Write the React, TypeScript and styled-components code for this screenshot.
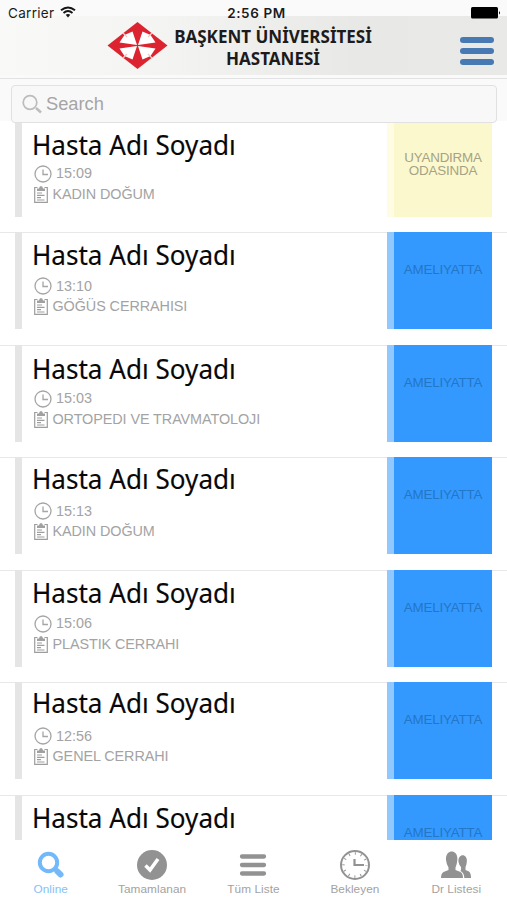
import React from "react";
import styled, { createGlobalStyle } from "styled-components";

const Global = createGlobalStyle`
  * { box-sizing: border-box; }
  body { margin: 0; background: #fff; font-family: "Liberation Sans", Arial, sans-serif; }
`;

const Screen = styled.div`
  width: 507px;
  height: 900px;
  display: flex;
  flex-direction: column;
  overflow: hidden;
  background: #fff;
`;

const Header = styled.header`
  height: 79px;
  flex: none;
  background: #fafafa;
  border-bottom: 1px solid #e2e2e2;
`;

const StatusBar = styled.div`
  height: 16px;
  padding: 4px 6px 0 8px;
  display: grid;
  grid-template-columns: 1fr auto 1fr;
  color: #1c1c1c;
  font: 13.5px/19px Inter, "Liberation Sans", sans-serif;
`;

const Carrier = styled.div`
  display: flex;
  gap: 6px;
  letter-spacing: 0.3px;
  svg { margin-top: 2px; }
`;

const Clock = styled.div`
  font-weight: 600;
  letter-spacing: 0.6px;
  padding-left: 4px;
`;

const Battery = styled.svg`
  justify-self: end;
  margin-top: 3px;
`;

const Banner = styled.div`
  height: 59px;
  padding: 6px 13px 0 107px;
  display: flex;
  background: linear-gradient(90deg, #f9f9f8 0%, #f3f3f1 35%, #e8e8e6 70%, #e9e9e7 100%);
`;

const Logo = styled.svg`
  flex: none;
`;

const Title = styled.h1`
  margin: 3px 0 0 -15px;
  width: 240px;
  flex: none;
  text-align: center;
  font: 700 18px/22px "Noto Sans", "Open Sans", sans-serif;
  color: #1d1b1b;
  transform: scaleX(0.945);
`;

const MenuButton = styled.button`
  margin: 15px 0 0 auto;
  padding: 0;
  border: 0;
  background: none;
  width: 34px;
  height: 28px;
  display: flex;
  flex-direction: column;
  justify-content: space-between;
`;

const MenuLine = styled.span`
  height: 6px;
  border-radius: 3px;
  background: #4779b2;
`;

const SearchBar = styled.div`
  height: 44px;
  flex: none;
  padding: 6px 10px 0 11px;
  background: linear-gradient(#fafafa 42px, #fff 42px);
`;

const SearchField = styled.div`
  height: 38px;
  border: 1.5px solid #e1e1e1;
  border-radius: 4px;
  background: #f8f8f8;
  display: flex;
  align-items: center;
  padding-left: 10px;
  gap: 3px;
  color: #a5a5a5;
  font-size: 18.3px;
  line-height: 20px;
`;

const List = styled.main`
  flex: 1;
  min-height: 0;
  overflow: hidden;
`;

const Row = styled.article<{ $first?: boolean }>`
  height: 112.5px;
  margin-top: ${(p) => (p.$first ? "-3.5px" : "0")};
  display: flex;
  padding: 0 15px;
  background: linear-gradient(#e8e8e8, #e8e8e8) 0 0 / 100% 1px no-repeat;
`;

const Marker = styled.div`
  width: 7px;
  height: 97px;
  flex: none;
  background: #e5e5e5;
`;

const Details = styled.div`
  flex: 1;
  min-width: 0;
  padding-left: 10px;
  display: flex;
  flex-direction: column;
`;

const NameLine = styled.div<{ $shift: number }>`
  height: 44px;
  padding-top: ${(p) => p.$shift}px;
`;

const Name = styled.h2`
  margin: 0;
  width: max-content;
  font: 400 27px/32px "Noto Sans", "Open Sans", sans-serif;
  color: #080808;
  transform: scaleX(0.966);
  transform-origin: 0 0;
  -webkit-text-stroke: 0.15px #080808;
`;

const Meta = styled.div`
  height: 20.5px;
  display: flex;
  align-items: center;
  gap: 4px;
  padding-left: 2px;
  color: #a3a3a3;
  font-size: 14.4px;
  white-space: nowrap;
  svg { flex: none; }
`;

const Department = styled.span`
  letter-spacing: -0.08px;
  margin-top: -1px;
  margin-left: 0.5px;
`;

const Time = styled.span`
  margin-top: -1px;
`;

const Status = styled.div<{ $waking?: boolean }>`
  width: 105px;
  height: 97px;
  flex: none;
  padding-top: 31px;
  border-left: 7px solid ${(p) => (p.$waking ? "#fffce3" : "#91c8fd")};
  background: ${(p) => (p.$waking ? "#fcf8cd" : "#3399ff")};
  color: ${(p) => (p.$waking ? "#a5a386" : "#2476c6")};
  text-align: center;
  font-size: 13.4px;
  line-height: 13.5px;
  letter-spacing: -0.2px;
`;

const TabBar = styled.nav`
  height: 60px;
  flex: none;
  display: grid;
  grid-template-columns: repeat(5, 1fr);
  background: #fff;
`;

const Tab = styled.button<{ $active?: boolean }>`
  border: 0;
  padding: 9px 0 0;
  background: none;
  display: flex;
  flex-direction: column;
  align-items: center;
  gap: 1px;
  color: ${(p) => (p.$active ? "#73b8f8" : "#929292")};
  font: 11.8px/14px "Liberation Sans", Arial, sans-serif;
  letter-spacing: 0.05px;
  white-space: nowrap;
`;

const TabLabel = styled.span<{ $active?: boolean }>`
  color: ${(p) => (p.$active ? "#85c1f8" : "#a2a2a2")};
`;

const BaskentLogo = () => (
  <Logo width="61" height="47" viewBox="0 0 61 47">
    <path d="M30.500 0 60.500 23.500 30.500 47 0.500 23.500Z" fill="#dc2430" />
    <g fill="#fff">
      <path d="M30 23 12.500 20.500 17.500 13 25.500 9.500Z" />
      <path d="M31 23 48.500 20.500 43.500 13 35.500 9.500Z" />
      <path d="M30 24 12.500 26.500 17.500 34 25.500 37.500Z" />
      <path d="M31 24 48.500 26.500 43.500 34 35.500 37.500Z" />
    </g>
    <path d="M16 11 20 15M45 11 41 15M16 36 20 32M45 36 41 32" stroke="#f7c8c5" strokeWidth="1.3" />
  </Logo>
);

const WifiIcon = () => (
  <svg width="16" height="12" viewBox="0 0 16 12" fill="none" stroke="#151515" strokeWidth="1.9">
    <path d="M1 4.300Q8-1.500 15 4.300M3.500 7Q8 3.200 12.500 7" />
    <path d="M5.700 8.800Q8 7 10.300 8.800L8 11.500Z" fill="#151515" stroke="none" />
  </svg>
);

const SmallClock = () => (
  <svg width="18" height="18" viewBox="0 0 18 18" fill="none" stroke="#a5a5a5" strokeWidth="1.3">
    <circle cx="9" cy="9" r="8" />
    <path d="M9 4.500V9.500H14" />
  </svg>
);

const Clipboard = () => (
  <svg width="14" height="17" viewBox="0 0 14 17" fill="none" stroke="#9d9d9d">
    <path d="M3.500 1.500H.7V16.300H13.300V1.500H10.500" strokeWidth="1.2" />
    <path d="M3 5V2.500H5Q5.200 0 7 0T9 2.500H11V5Z" fill="#a0a0a0" stroke="none" />
    <path d="M3 7H8M3 9.300H10.500M3 11.600H7M3 14H10.500" strokeWidth="1.2" />
  </svg>
);

const tabs = [
  {
    label: "Online",
    icon: (
      <svg width="30" height="32" viewBox="0 0 30 32" fill="none" stroke="currentColor">
        <circle cx="12.500" cy="13.500" r="8.700" strokeWidth="4" />
        <path d="m19 20 1.500 1.500" strokeWidth="4" />
        <path d="m21.500 22.500 3 3" strokeWidth="6" strokeLinecap="round" />
      </svg>
    ),
  },
  {
    label: "Tamamlanan",
    icon: (
      <svg width="30" height="32" viewBox="0 0 30 32">
        <circle cx="15" cy="16" r="15" fill="currentColor" />
        <path d="m8.500 16.500 4.500 4.500 8-11" fill="none" stroke="#fff" strokeWidth="3.500" />
      </svg>
    ),
  },
  {
    label: "Tüm Liste",
    icon: (
      <svg width="30" height="32" viewBox="0 0 30 32">
        <path d="M4 7.500H26M4 16H26M4 24.500H26" stroke="currentColor" strokeWidth="4.300" strokeLinecap="round" />
      </svg>
    ),
  },
  {
    label: "Bekleyen",
    icon: (
      <svg width="30" height="32" viewBox="0 0 30 32" fill="none" stroke="currentColor">
        <circle cx="15" cy="16" r="14" strokeWidth="2" />
        <circle cx="15" cy="16" r="11.500" strokeWidth="2.500" strokeDasharray="1 5.021" strokeDashoffset="0.5" />
        <path d="M14.500 10V16H24" strokeWidth="2.200" />
      </svg>
    ),
  },
  {
    label: "Dr Listesi",
    icon: (
      <svg width="30" height="32" viewBox="0 0 30 32" fill="currentColor">
        <path d="M17.500 13C16.500 4 27 4 25.800 13Q25.500 16 24.500 18V21L28 22.500Q30 24 30 29H23.300Q23.300 24 19.500 22Q20.500 20 20 18Q18 16 17.500 13Z" />
        <path d="M5 11C4-.5 17.500-.5 16.300 11Q16 15.500 14.500 18.500V21L19.500 23Q22 24.500 22 29H0Q0 24.500 2.500 23L7.500 21V18.500Q5.500 15.500 5 11Z" />
      </svg>
    ),
  },
];

interface Patient {
  shift: number;
  time?: string;
  department?: string;
  waking?: boolean;
}

const patients: Patient[] = [
  { time: "15:09", department: "KADIN DOĞUM", shift: 9, waking: true },
  { time: "13:10", department: "GÖĞÜS CERRAHISI", shift: 6.500 },
  { time: "15:03", department: "ORTOPEDI VE TRAVMATOLOJI", shift: 8 },
  { time: "15:13", department: "KADIN DOĞUM", shift: 5.500 },
  { time: "15:06", department: "PLASTIK CERRAHI", shift: 7 },
  { time: "12:56", department: "GENEL CERRAHI", shift: 4.500 },
  { shift: 7 },
];

export default function App() {
  return (
    <Screen>
      <Global />
      <Header>
        <StatusBar>
          <Carrier>Carrier <WifiIcon /></Carrier>
          <Clock>2:56 PM</Clock>
          <Battery width="30" height="12" viewBox="0 0 30 12">
            <rect width="27" height="11.500" rx="1.500" />
            <path d="M28 4Q30 5.800 28 7.500Z" />
          </Battery>
        </StatusBar>
        <Banner>
          <BaskentLogo />
          <Title>BAŞKENT ÜNİVERSİTESİ<br />HASTANESİ</Title>
          <MenuButton aria-label="Menu"><MenuLine /><MenuLine /><MenuLine /></MenuButton>
        </Banner>
      </Header>
      <SearchBar>
        <SearchField>
          <svg width="21" height="20" viewBox="0 0 21 20" fill="none" stroke="#bcbcbc">
            <circle cx="8" cy="8.500" r="6.800" strokeWidth="1.700" />
            <path d="m14 14 5 4.500" strokeWidth="2.500" />
          </svg>
          Search
        </SearchField>
      </SearchBar>
      <List>
        {patients.map((p, i) => (
          <Row key={i} $first={i === 0}>
            <Marker />
            <Details>
              <NameLine $shift={p.shift}><Name>Hasta Adı Soyadı</Name></NameLine>
              {p.time && <Meta><SmallClock /><Time>{p.time}</Time></Meta>}
              {p.department && <Meta><Clipboard /><Department>{p.department}</Department></Meta>}
            </Details>
            <Status $waking={p.waking}>{p.waking ? <>UYANDIRMA<br />ODASINDA</> : "AMELIYATTA"}</Status>
          </Row>
        ))}
      </List>
      <TabBar>
        {tabs.map((t, i) => (
          <Tab key={t.label} $active={i === 0}>
            {t.icon}
            <TabLabel $active={i === 0}>{t.label}</TabLabel>
          </Tab>
        ))}
      </TabBar>
    </Screen>
  );
}
